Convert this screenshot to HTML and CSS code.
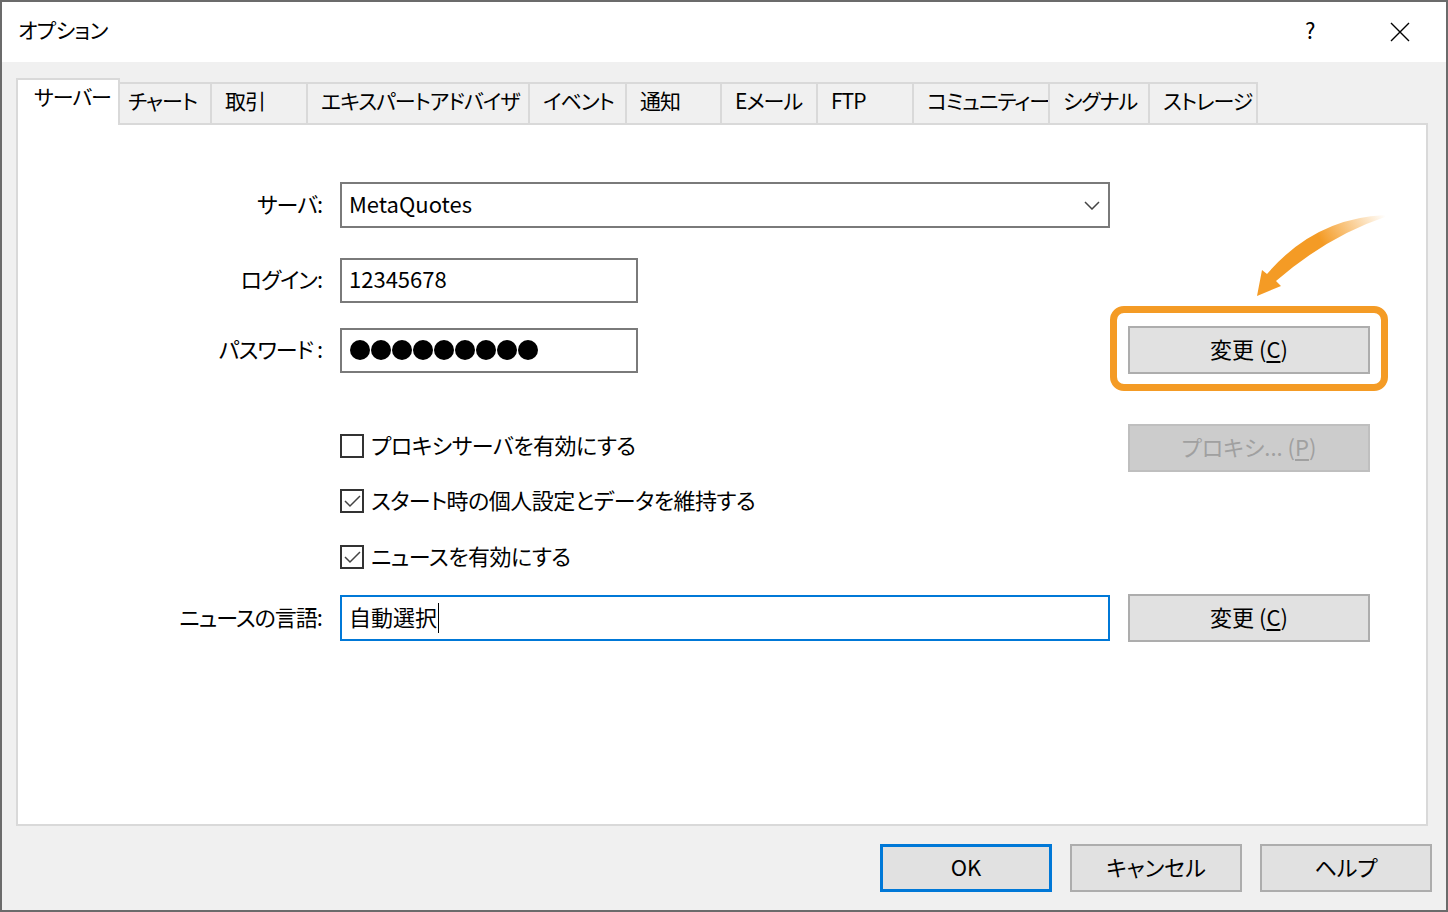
FILE: index.html
```html
<!DOCTYPE html>
<html lang="ja">
<head>
    <meta charset="UTF-8">
    <title>オプション</title>
    <link rel="stylesheet" href="styles.css">
</head>
<body>
    <div class="window">
        <div class="titlebar">
            <div class="title">オプション</div>
            <div class="help-btn">?</div>
            <div class="close-btn">
                <svg width="20" height="20" viewBox="0 0 20 20">
                    <path d="M1 1 L19 19 M19 1 L1 19" stroke="#000" stroke-width="1.4" fill="none"/>
                </svg>
            </div>
        </div>

        <div class="dialog-body">
            <div class="tabs">
                <div class="tab active" style="width:104px">サーバー</div>
                <div class="tab" style="width:94px; padding-left:8px">チャート</div>
                <div class="tab" style="width:98px">取引</div>
                <div class="tab" style="width:224px">エキスパートアドバイザ</div>
                <div class="tab" style="width:99px">イベント</div>
                <div class="tab" style="width:97px">通知</div>
                <div class="tab" style="width:98px">Eメール</div>
                <div class="tab" style="width:98px">FTP</div>
                <div class="tab" style="width:138px">コミュニティー</div>
                <div class="tab" style="width:102px">シグナル</div>
                <div class="tab" style="width:110px">ストレージ</div>
            </div>

            <div class="panel">
                <div class="row row-server">
                    <label class="label">サーバ:</label>
                    <div class="control">
                        <div class="field select">
                            <span>MetaQuotes</span>
                            <svg class="chevron" width="16" height="9" viewBox="0 0 16 9">
                                <polyline points="1,1 8,8 15,1" stroke="#444" stroke-width="1.5" fill="none"/>
                            </svg>
                        </div>
                    </div>
                </div>

                <div class="row row-login">
                    <label class="label">ログイン:</label>
                    <div class="control">
                        <div class="field short">12345678</div>
                    </div>
                </div>

                <div class="row row-password">
                    <label class="label">パスワード :</label>
                    <div class="control">
                        <div class="field short dots">
                            <span class="dot"></span><span class="dot"></span><span class="dot"></span>
                            <span class="dot"></span><span class="dot"></span><span class="dot"></span>
                            <span class="dot"></span><span class="dot"></span><span class="dot"></span>
                        </div>
                    </div>
                    <button class="btn">変更 (<u>C</u>)</button>
                </div>

                <div class="row row-proxy">
                    <div class="label"></div>
                    <div class="control">
                        <div class="check proxy-check">
                            <span class="box"></span>
                            <span class="check-text">プロキシサーバを有効にする</span>
                        </div>
                    </div>
                    <button class="btn disabled">プロキシ... (<u>P</u>)</button>
                </div>

                <div class="row row-keep">
                    <div class="label"></div>
                    <div class="control">
                        <div class="check">
                            <span class="box">
                                <svg width="20" height="20" viewBox="0 0 20 20">
                                    <polyline points="3,10 8,15 18,5" stroke="#444" stroke-width="1.5" fill="none"/>
                                </svg>
                            </span>
                            <span class="check-text">スタート時の個人設定とデータを維持する</span>
                        </div>
                    </div>
                </div>

                <div class="row row-news">
                    <div class="label"></div>
                    <div class="control">
                        <div class="check">
                            <span class="box">
                                <svg width="20" height="20" viewBox="0 0 20 20">
                                    <polyline points="3,10 8,15 18,5" stroke="#444" stroke-width="1.5" fill="none"/>
                                </svg>
                            </span>
                            <span class="check-text">ニュースを有効にする</span>
                        </div>
                    </div>
                </div>

                <div class="row row-lang">
                    <label class="label">ニュースの言語:</label>
                    <div class="control">
                        <div class="field focused">自動選択<span class="caret"></span></div>
                    </div>
                    <button class="btn">変更 (<u>C</u>)</button>
                </div>

                <!-- annotation -->
                <div class="highlight"></div>
                <svg class="arrow" width="160" height="110" viewBox="0 0 160 110">
                    <defs>
                        <linearGradient id="fade" x1="145" y1="15" x2="40" y2="80" gradientUnits="userSpaceOnUse">
                            <stop offset="0" stop-color="#f49b25" stop-opacity="0"/>
                            <stop offset="0.55" stop-color="#f49b25" stop-opacity="1"/>
                            <stop offset="1" stop-color="#f49b25"/>
                        </linearGradient>
                    </defs>
                    <path d="M145,15 Q75,18 27,74 L22,70 L17,96 L41,86 L36,81 Q88,36 145,17 Z" fill="url(#fade)"/>
                </svg>
            </div>

            <div class="footer">
                <button class="btn footer-btn default">OK</button>
                <button class="btn footer-btn">キャンセル</button>
                <button class="btn footer-btn">ヘルプ</button>
            </div>
        </div>
    </div>
</body>
</html>
```

FILE: styles.css
```css
/* General */
body {
    margin: 0;
    padding: 0;
    font-family: "Noto Sans CJK JP", "Noto Sans", sans-serif;
    font-feature-settings: "palt";
    font-size: 22px;
    color: #000;
    background-color: #6b6b6b;
}

.window {
    width: 1448px;
    height: 912px;
    box-sizing: border-box;
    border: 2px solid #6b6b6b;
    display: flex;
    flex-direction: column;
    background-color: #f0f0f0;
}

/* Title bar */
.titlebar {
    height: 60px;
    flex-shrink: 0;
    background-color: #fff;
    display: flex;
    align-items: center;
    padding: 0 16px;
}

.title {
    flex: 1;
    font-size: 21px;
    letter-spacing: -0.5px;
    line-height: 30px;
    padding-bottom: 6px;
}

.help-btn {
    width: 20px;
    margin-right: 65px;
    line-height: 30px;
    padding-bottom: 6px;
}

.close-btn {
    width: 20px;
    height: 20px;
    margin-right: 20px;
}

.close-btn svg {
    display: block;
}

/* Body */
.dialog-body {
    flex: 1;
    display: flex;
    flex-direction: column;
    padding: 16px 18px 0 14px;
}

/* Tabs */
.tabs {
    display: flex;
    align-items: flex-end;
    height: 47px;
    margin-bottom: -2px;
    position: relative;
    z-index: 1;
}

.tab {
    box-sizing: border-box;
    height: 41px;
    margin-bottom: 2px;
    margin-left: -2px;
    padding-left: 13px;
    border: 2px solid #d9d9d9;
    border-bottom: none;
    background-color: #f0f0f0;
    font-size: 21px;
    letter-spacing: -1px;
    line-height: 32px;
    white-space: nowrap;
    overflow: hidden;
}

.tab.active {
    height: 47px;
    margin-bottom: 0;
    margin-left: 0;
    padding-left: 16px;
    padding-top: 1px;
    line-height: 30px;
    background-color: #fff;
    position: relative;
    z-index: 2;
}

/* Panel */
.panel {
    height: 703px;
    box-sizing: border-box;
    border: 2px solid #d9d9d9;
    background-color: #fff;
    padding-top: 57px;
    position: relative;
}

.row {
    display: flex;
    align-items: center;
}

.label {
    width: 322px;
    box-sizing: border-box;
    padding-right: 18px;
    padding-bottom: 5px;
    text-align: right;
    letter-spacing: -1px;
    white-space: nowrap;
    flex-shrink: 0;
}

.control {
    width: 770px;
    margin-right: 18px;
    flex-shrink: 0;
    display: flex;
}

.field {
    box-sizing: border-box;
    width: 770px;
    height: 46px;
    border: 2px solid #7a7a7a;
    padding-left: 7px;
    padding-bottom: 5px;
    display: flex;
    align-items: center;
    line-height: 30px;
}

.field.short {
    width: 298px;
    height: 45px;
}

.field.focused {
    border-color: #0078d7;
}

.select {
    justify-content: space-between;
    padding-right: 8px;
}

.chevron {
    display: block;
    margin-top: 5px;
}

.dots {
    gap: 1px;
    padding-left: 8px;
    padding-bottom: 0;
}

.dot {
    width: 20px;
    height: 20px;
    border-radius: 50%;
    background-color: #000;
}

.caret {
    display: inline-block;
    width: 1px;
    height: 30px;
    margin-left: 1px;
    margin-top: 5px;
    background-color: #000;
}

/* Checkboxes */
.check {
    display: flex;
    align-items: center;
    gap: 7px;
    height: 24px;
    line-height: 24px;
    white-space: nowrap;
}

.check-text {
    letter-spacing: -0.5px;
    padding-bottom: 4px;
}

.proxy-check {
    margin-top: 10px;
}

.row-proxy .control {
    align-self: flex-start;
}

.box {
    width: 24px;
    height: 24px;
    box-sizing: border-box;
    border: 2px solid #333;
    display: flex;
    align-items: center;
    justify-content: center;
    flex-shrink: 0;
}

.box svg {
    display: block;
}

.row-login { margin-top: 30px; }
.row-password { margin-top: 23px; }
.row-proxy { margin-top: 50px; }
.row-keep { margin-top: 17px; }
.row-news { margin-top: 32px; }
.row-lang { margin-top: 25px; }

/* Buttons */
.btn {
    box-sizing: border-box;
    width: 242px;
    height: 48px;
    border: 2px solid #adadad;
    background-color: #e1e1e1;
    font-family: inherit;
    font-feature-settings: "palt";
    font-size: 22px;
    color: #000;
    padding: 0 0 5px;
    line-height: 30px;
}

.btn u {
    text-underline-offset: 3px;
}

.btn.disabled {
    background-color: #cccccc;
    border-color: #bfbfbf;
    color: #a0a0a0;
}

.footer {
    display: flex;
    justify-content: flex-end;
    gap: 18px;
    padding-top: 18px;
    margin-right: -4px;
}

.footer-btn {
    width: 172px;
}

.footer-btn.default {
    border: 3px solid #0078d7;
}

/* Annotation overlay */
.highlight {
    position: absolute;
    left: 1092px;
    top: 181px;
    width: 278px;
    height: 85px;
    box-sizing: border-box;
    border: 7px solid #f49b25;
    border-radius: 14px;
}

.arrow {
    position: absolute;
    left: 1222px;
    top: 75px;
}
```
